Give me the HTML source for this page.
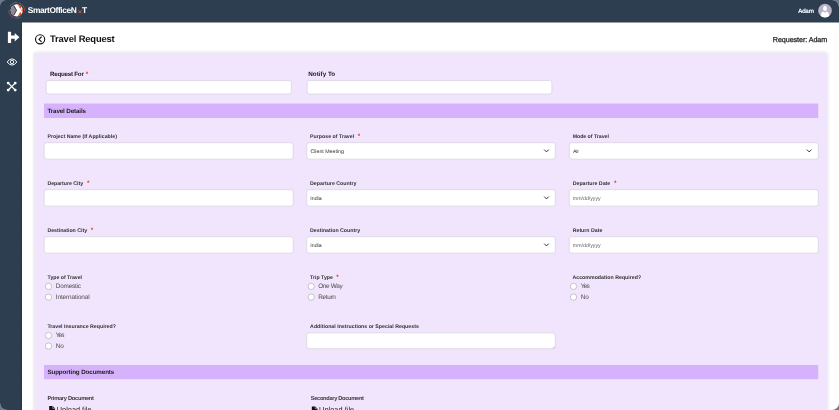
<!DOCTYPE html>
<html><head><meta charset="utf-8">
<style>
*{box-sizing:border-box;margin:0;padding:0}
html,body{width:839px;height:410px;overflow:hidden;background:#6d7986;font-family:"Liberation Sans",sans-serif;}
#app{position:absolute;left:0;top:0;width:839px;height:410px;background:#fff;border-radius:7px;overflow:hidden}
svg{position:absolute;left:0;top:0}
#tx{position:absolute;left:0;top:0;width:839px;height:410px;will-change:transform}
.t{position:absolute;white-space:nowrap;line-height:1;display:block;text-rendering:geometricPrecision}
</style></head><body>
<div id="app">
<svg width="839" height="410" viewBox="0 0 839 410">
<defs><filter id="sh" x="-5%" y="-5%" width="110%" height="110%"><feDropShadow dx="0" dy="0" stdDeviation="1.5" flood-color="#000" flood-opacity="0.27"/></filter></defs>
<rect x="34.7" y="52.9" width="792.4" height="370" fill="#f1e4fd" filter="url(#sh)"/>
<rect x="44.0" y="103.5" width="774.20" height="14.50" fill="#d5b2fb"/>
<rect x="44.0" y="365.0" width="774.20" height="14.20" fill="#d5b2fb"/>
<rect x="46.15" y="80.45" width="245.25" height="13.60" fill="#fff" rx="2.3" stroke="#d9d3e0" stroke-width="0.8"/>
<rect x="307.15" y="80.45" width="244.75" height="13.60" fill="#fff" rx="2.3" stroke="#d9d3e0" stroke-width="0.8"/>
<rect x="44.15" y="142.65" width="249.05" height="16.50" fill="#fff" rx="2.3" stroke="#d9d3e0" stroke-width="0.8"/>
<rect x="306.75" y="142.65" width="248.55" height="16.50" fill="#fff" rx="2.3" stroke="#d9d3e0" stroke-width="0.8"/>
<rect x="569.25" y="142.65" width="249.05" height="16.50" fill="#fff" rx="2.3" stroke="#d9d3e0" stroke-width="0.8"/>
<rect x="44.15" y="189.65" width="249.05" height="16.50" fill="#fff" rx="2.3" stroke="#d9d3e0" stroke-width="0.8"/>
<rect x="306.75" y="189.65" width="248.55" height="16.50" fill="#fff" rx="2.3" stroke="#d9d3e0" stroke-width="0.8"/>
<rect x="569.25" y="189.65" width="249.05" height="16.50" fill="#fff" rx="2.3" stroke="#d9d3e0" stroke-width="0.8"/>
<rect x="44.15" y="236.65" width="249.05" height="16.50" fill="#fff" rx="2.3" stroke="#d9d3e0" stroke-width="0.8"/>
<rect x="306.75" y="236.65" width="248.55" height="16.50" fill="#fff" rx="2.3" stroke="#d9d3e0" stroke-width="0.8"/>
<rect x="569.25" y="236.65" width="249.05" height="16.50" fill="#fff" rx="2.3" stroke="#d9d3e0" stroke-width="0.8"/>
<rect x="306.75" y="332.85" width="248.55" height="15.90" fill="#fff" rx="2.3" stroke="#d9d3e0" stroke-width="0.8"/>
<path d="M544.5 149.9 L546.5 151.9 L548.5 149.9" fill="none" stroke="#272b3a" stroke-width="0.98" stroke-linecap="round" stroke-linejoin="round"/>
<path d="M807.2 149.9 L809.2 151.9 L811.2 149.9" fill="none" stroke="#272b3a" stroke-width="0.98" stroke-linecap="round" stroke-linejoin="round"/>
<path d="M544.5 196.9 L546.5 198.9 L548.5 196.9" fill="none" stroke="#272b3a" stroke-width="0.98" stroke-linecap="round" stroke-linejoin="round"/>
<path d="M544.5 243.9 L546.5 245.9 L548.5 243.9" fill="none" stroke="#272b3a" stroke-width="0.98" stroke-linecap="round" stroke-linejoin="round"/>
<path d="M555.6 345.6 L555.6 349.3 L551.9 349.3 Z" fill="#f1e4fd"/><path d="M554.9 346.4 L552.7 348.6 M554.9 347.6 L553.9 348.6" stroke="#8a8a92" stroke-width="0.45"/>
<circle cx="48.5" cy="286.4" r="3.15" fill="#fff" stroke="#a5a3ab" stroke-width="0.6"/>
<circle cx="48.5" cy="297.1" r="3.15" fill="#fff" stroke="#a5a3ab" stroke-width="0.6"/>
<circle cx="311.2" cy="286.4" r="3.15" fill="#fff" stroke="#a5a3ab" stroke-width="0.6"/>
<circle cx="311.2" cy="297.1" r="3.15" fill="#fff" stroke="#a5a3ab" stroke-width="0.6"/>
<circle cx="573.5" cy="286.4" r="3.15" fill="#fff" stroke="#a5a3ab" stroke-width="0.6"/>
<circle cx="573.5" cy="297.1" r="3.15" fill="#fff" stroke="#a5a3ab" stroke-width="0.6"/>
<circle cx="48.5" cy="335.5" r="3.15" fill="#fff" stroke="#a5a3ab" stroke-width="0.6"/>
<circle cx="48.5" cy="346.1" r="3.15" fill="#fff" stroke="#a5a3ab" stroke-width="0.6"/>
<path d="M49.2 406.1 h3.5 l2.3 2.3 v5 h-5.8 z" fill="#111"/><path d="M52.7 406.1 v2.3 h2.3" fill="none" stroke="#f1e4fd" stroke-width="0.5"/>
<path d="M311.8 406.4 h3.5 l2.3 2.3 v5 h-5.8 z" fill="#111"/><path d="M315.3 406.4 v2.3 h2.3" fill="none" stroke="#f1e4fd" stroke-width="0.5"/>
<rect x="0" y="0" width="839.00" height="22.50" fill="#2d3e50"/>
<rect x="0" y="0" width="22.00" height="410.00" fill="#2d3e50"/>
<line x1="21.1" y1="22" x2="21.1" y2="410" stroke="#1f2b3a" stroke-width="0.9" stroke-dasharray="0.9 1.3"/>
<path d="M78.5 10.4 L81.3 13.2 M81.3 10.4 L78.5 13.2" stroke="#ea5a34" stroke-width="0.95"/>
<circle cx="40.1" cy="39.3" r="4.6" fill="none" stroke="#111" stroke-width="1.1"/><path d="M41.3 37.0 L39.0 39.3 L41.3 41.6" fill="none" stroke="#111" stroke-width="1.1" stroke-linecap="round" stroke-linejoin="round"/>
<path d="M7.9 31.7 h3.2 v3.8 h3.6 v-2.6 l4.7 4.3 l-4.7 4.3 v-2.7 h-3.6 v4.2 h-3.2 z" fill="#fff"/>
<path d="M7.1 62 Q12 55.8 16.9 62 Q12 68.2 7.1 62 Z" fill="none" stroke="#fff" stroke-width="1.0"/><circle cx="12" cy="62" r="1.7" fill="none" stroke="#fff" stroke-width="0.9"/>
<path d="M8.3 83.2 L15.1 90 M15.1 83.2 L8.3 90" stroke="#fff" stroke-width="1.2"/><circle cx="8.2" cy="83.1" r="1.4" fill="#fff"/><circle cx="15.2" cy="83.1" r="1.4" fill="#fff"/><circle cx="8.2" cy="90.1" r="1.4" fill="#fff"/><circle cx="15.2" cy="90.1" r="1.4" fill="#fff"/>
<g>
<clipPath id="lc"><circle cx="16.7" cy="10.35" r="6.05"/></clipPath>
<circle cx="16.7" cy="10.35" r="6.05" fill="#fff"/>
<g clip-path="url(#lc)">
<path d="M9 3 L13.0 3 L16.9 10.35 L13.0 17.7 L9 17.7 Z" fill="#8b8797"/>
<path d="M13.6 5.4 L16.5 10.35 L13.6 15.3" fill="none" stroke="#4d3430" stroke-width="0.9"/>
<path d="M17.2 3.5 L23.6 3.5 L20.2 8.9 Z M24.5 5.8 L24.5 14.9 L21.2 10.35 Z M17.2 17.2 L23.6 17.2 L20.2 11.8 Z" fill="#e8502a"/>
</g>
<path d="M18.74 2.72 A7.9 7.9 0 0 1 24.57 11.04 M14.00 17.77 A7.9 7.9 0 0 1 8.80 10.35" fill="none" stroke="#e8502a" stroke-width="0.65"/>
<path d="M9.86 6.40 A7.9 7.9 0 0 1 17.39 2.48 M20.65 17.19 A7.9 7.9 0 0 1 14.66 17.98" fill="none" stroke="#7d7887" stroke-width="0.65"/>
</g>
<g><clipPath id="ac"><circle cx="825" cy="10.7" r="6.9"/></clipPath>
<circle cx="825" cy="10.7" r="7.3" fill="#243343"/><circle cx="825" cy="10.7" r="6.9" fill="#b7b2c5"/>
<g clip-path="url(#ac)"><ellipse cx="825" cy="8.4" rx="1.9" ry="2.6" fill="#fff"/>
<path d="M820.6 18 L821.3 13.2 Q821.8 11.8 823.5 11.5 L825 12.8 L826.5 11.5 Q828.2 11.8 828.7 13.2 L829.4 18 Z" fill="#fff"/></g></g>
</svg>
<div id="tx"><span class="t" style="left:27.80px;top:6px;font-size:8.40px;letter-spacing:-0.408px;font-weight:bold;color:#fff;">SmartOfficeN</span>
<span class="t" style="left:82.00px;top:6px;font-size:8.40px;letter-spacing:-1.031px;font-weight:bold;color:#fff;">T</span>
<span class="t" style="left:797.90px;top:9px;font-size:6.30px;letter-spacing:-0.468px;font-weight:bold;color:#fff;">Adam</span>
<span class="t" style="left:50.00px;top:34px;font-size:9.40px;letter-spacing:-0.152px;font-weight:bold;color:#111;">Travel Request</span>
<span class="t" style="left:772.80px;top:36px;font-size:7.20px;letter-spacing:-0.081px;font-weight:normal;color:#222;-webkit-text-stroke:0.25px #222;">Requester: Adam</span>
<span class="t" style="left:50.10px;top:72px;font-size:6.20px;letter-spacing:-0.237px;font-weight:bold;color:#222;">Request For</span>
<span class="t" style="left:85.85px;top:72px;font-size:6.40px;letter-spacing:0.009px;font-weight:bold;color:#e2401c;">*</span>
<span class="t" style="left:308.30px;top:72px;font-size:6.30px;letter-spacing:0.009px;font-weight:bold;color:#222;">Notify To</span>
<span class="t" style="left:47.40px;top:109px;font-size:6.25px;letter-spacing:-0.131px;font-weight:bold;color:#222;">Travel Details</span>
<span class="t" style="left:47.40px;top:370px;font-size:6.25px;letter-spacing:-0.116px;font-weight:bold;color:#222;">Supporting Documents</span>
<span class="t" style="left:47.40px;top:135px;font-size:5.24px;letter-spacing:0.007px;font-weight:bold;color:#333;">Project Name (If Applicable)</span>
<span class="t" style="left:310.10px;top:135px;font-size:5.24px;letter-spacing:0.008px;font-weight:bold;color:#333;">Purpose of Travel</span>
<span class="t" style="left:357.75px;top:134px;font-size:6.40px;letter-spacing:0.009px;font-weight:bold;color:#e2401c;">*</span>
<span class="t" style="left:572.70px;top:135px;font-size:5.24px;letter-spacing:-0.038px;font-weight:bold;color:#333;">Mode of Travel</span>
<span class="t" style="left:47.40px;top:182px;font-size:5.24px;letter-spacing:-0.031px;font-weight:bold;color:#333;">Departure City</span>
<span class="t" style="left:86.95px;top:181px;font-size:6.40px;letter-spacing:0.009px;font-weight:bold;color:#e2401c;">*</span>
<span class="t" style="left:310.10px;top:182px;font-size:5.24px;letter-spacing:0.000px;font-weight:bold;color:#333;">Departure Country</span>
<span class="t" style="left:572.70px;top:182px;font-size:5.24px;letter-spacing:0.000px;font-weight:bold;color:#333;">Departure Date</span>
<span class="t" style="left:614.02px;top:181px;font-size:6.40px;letter-spacing:0.009px;font-weight:bold;color:#e2401c;">*</span>
<span class="t" style="left:47.40px;top:229px;font-size:5.24px;letter-spacing:-0.012px;font-weight:bold;color:#333;">Destination City</span>
<span class="t" style="left:90.85px;top:228px;font-size:6.40px;letter-spacing:0.009px;font-weight:bold;color:#e2401c;">*</span>
<span class="t" style="left:310.10px;top:229px;font-size:5.24px;letter-spacing:-0.000px;font-weight:bold;color:#333;">Destination Country</span>
<span class="t" style="left:572.70px;top:229px;font-size:5.24px;letter-spacing:-0.000px;font-weight:bold;color:#333;">Return Date</span>
<span class="t" style="left:310.40px;top:150px;font-size:5.24px;letter-spacing:0.000px;font-weight:normal;color:#333;">Client Meeting</span>
<span class="t" style="left:572.90px;top:150px;font-size:5.24px;letter-spacing:-0.102px;font-weight:normal;color:#333;">Air</span>
<span class="t" style="left:310.30px;top:197px;font-size:5.24px;letter-spacing:0.000px;font-weight:normal;color:#333;">India</span>
<span class="t" style="left:572.80px;top:197px;font-size:5.24px;letter-spacing:0.000px;font-weight:normal;color:#666;">mm/dd/yyyy</span>
<span class="t" style="left:310.30px;top:244px;font-size:5.24px;letter-spacing:0.000px;font-weight:normal;color:#333;">India</span>
<span class="t" style="left:572.80px;top:244px;font-size:5.24px;letter-spacing:0.000px;font-weight:normal;color:#666;">mm/dd/yyyy</span>
<span class="t" style="left:47.60px;top:276px;font-size:5.24px;letter-spacing:-0.027px;font-weight:bold;color:#333;">Type of Travel</span>
<span class="t" style="left:310.10px;top:276px;font-size:5.24px;letter-spacing:-0.013px;font-weight:bold;color:#333;">Trip Type</span>
<span class="t" style="left:336.25px;top:275px;font-size:6.40px;letter-spacing:0.009px;font-weight:bold;color:#e2401c;">*</span>
<span class="t" style="left:572.40px;top:276px;font-size:5.24px;letter-spacing:0.022px;font-weight:bold;color:#333;">Accommodation Required?</span>
<span class="t" style="left:55.80px;top:284px;font-size:6.40px;letter-spacing:-0.210px;font-weight:normal;color:#4a4a4a;">Domestic</span>
<span class="t" style="left:55.80px;top:295px;font-size:6.40px;letter-spacing:-0.110px;font-weight:normal;color:#4a4a4a;">International</span>
<span class="t" style="left:318.20px;top:284px;font-size:6.40px;letter-spacing:-0.306px;font-weight:normal;color:#4a4a4a;">One Way</span>
<span class="t" style="left:318.20px;top:295px;font-size:6.40px;letter-spacing:-0.322px;font-weight:normal;color:#4a4a4a;">Return</span>
<span class="t" style="left:580.70px;top:284px;font-size:6.40px;letter-spacing:-0.721px;font-weight:normal;color:#4a4a4a;">Yes</span>
<span class="t" style="left:580.70px;top:295px;font-size:6.40px;letter-spacing:-0.082px;font-weight:normal;color:#4a4a4a;">No</span>
<span class="t" style="left:47.40px;top:325px;font-size:5.24px;letter-spacing:-0.005px;font-weight:bold;color:#333;">Travel Insurance Required?</span>
<span class="t" style="left:310.10px;top:325px;font-size:5.24px;letter-spacing:0.005px;font-weight:bold;color:#333;">Additional Instructions or Special Requests</span>
<span class="t" style="left:55.70px;top:333px;font-size:6.40px;letter-spacing:-0.821px;font-weight:normal;color:#4a4a4a;">Yes</span>
<span class="t" style="left:55.70px;top:344px;font-size:6.40px;letter-spacing:-0.082px;font-weight:normal;color:#4a4a4a;">No</span>
<span class="t" style="left:47.40px;top:397px;font-size:5.70px;letter-spacing:-0.266px;font-weight:bold;color:#3a3a3a;">Primary Document</span>
<span class="t" style="left:310.70px;top:397px;font-size:5.70px;letter-spacing:-0.306px;font-weight:bold;color:#3a3a3a;">Secondary Document</span>
<span class="t" style="left:56.80px;top:406px;font-size:7.30px;letter-spacing:0.021px;font-weight:normal;color:#222;">Upload file</span>
<span class="t" style="left:319.10px;top:406px;font-size:7.30px;letter-spacing:0.061px;font-weight:normal;color:#222;">Upload file</span></div>
</div>
</body></html>
